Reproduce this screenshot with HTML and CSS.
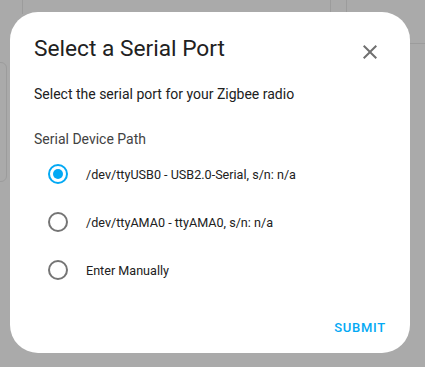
FILE: index.html
```html
<!DOCTYPE html>
<html>
<head>
<meta charset="utf-8">
<link rel="stylesheet" href="styles.css">
</head>
<body>
<div class="backdrop">
  <div class="bg-line bg-v1"></div>
  <div class="bg-line bg-v2"></div>
  <div class="bg-line bg-v3"></div>
  <div class="bg-line bg-h1"></div>
  <div class="bg-card"></div>
  <div class="dialog">
    <div class="header">
      <h2 class="title">Select a Serial Port</h2>
      <button class="close" aria-label="Close">
        <svg width="24" height="24" viewBox="0 0 24 24"><path d="M19 6.41 17.59 5 12 10.59 6.41 5 5 6.41 10.59 12 5 17.59 6.41 19 12 13.41 17.59 19 19 17.59 13.41 12z" fill="#707070"/></svg>
      </button>
    </div>
    <p class="desc">Select the serial port for your Zigbee radio</p>
    <div class="field-label">Serial Device Path</div>
    <div class="options">
      <label class="option"><span class="radio checked"></span><span class="opt-text">/dev/ttyUSB0 - USB2.0-Serial, s/n: n/a</span></label>
      <label class="option"><span class="radio"></span><span class="opt-text">/dev/ttyAMA0 - ttyAMA0, s/n: n/a</span></label>
      <label class="option"><span class="radio"></span><span class="opt-text">Enter Manually</span></label>
    </div>
    <div class="actions">
      <button class="submit">SUBMIT</button>
    </div>
  </div>
</div>
</body>
</html>
```
FILE: styles.css
```css
html, body {
  margin: 0;
  padding: 0;
  background: #aaaaaa;
  font-family: Roboto, "Noto Sans", sans-serif;
}
.backdrop {
  position: relative;
  width: 425px;
  height: 367px;
  overflow: hidden;
  background: #aaaaaa;
  padding: 12px 15px 0 10px;
  box-sizing: border-box;
}
.bg-line {
  position: absolute;
  background: #9c9c9c;
}
.bg-v1 { left: 22px; top: 0; width: 1px; height: 14px; }
.bg-v2 { left: 330px; top: 0; width: 1px; height: 14px; }
.bg-v3 { left: 346px; top: 0; width: 1px; height: 14px; }
.bg-h1 { left: 400px; top: 43px; width: 30px; height: 1px; }
.bg-card {
  position: absolute;
  left: -20px;
  top: 62px;
  width: 25px;
  height: 118px;
  border: 1px solid #9c9c9c;
  border-radius: 6px;
}
.dialog {
  position: relative;
  width: 400px;
  height: 341px;
  background: #ffffff;
  border-radius: 28px;
  box-sizing: border-box;
  padding: 0 24px 0 24px;
  display: flex;
  flex-direction: column;
}
.header {
  display: flex;
  align-items: center;
  justify-content: space-between;
  height: 56px;
  margin-top: 12px;
}
.title {
  margin: 0;
  font-size: 22.7px;
  font-weight: 400;
  color: #212121;
  line-height: 28px;
  position: relative;
  top: -3px;
}
.close {
  border: 0;
  background: none;
  padding: 0;
  width: 24px;
  height: 24px;
  margin-right: 4px;
  position: relative;
  top: 0;
  cursor: pointer;
}
.desc {
  margin: 6px 0 0 0;
  font-size: 14px;
  line-height: 20px;
  color: #212121;
  position: relative;
  top: -2px;
}
.field-label {
  margin-top: 23px;
  font-size: 14px;
  line-height: 20px;
  color: #424242;
}
.options {
  display: flex;
  flex-direction: column;
  margin-top: 1px;
}
.option {
  display: flex;
  align-items: center;
  height: 48px;
}
.radio {
  width: 20px;
  height: 20px;
  box-sizing: border-box;
  border: 2px solid #757575;
  border-radius: 50%;
  margin-left: 14px;
  margin-right: 18px;
  position: relative;
  flex: none;
}
.radio.checked {
  border-color: #03a9f4;
}
.radio.checked::after {
  content: "";
  position: absolute;
  left: 3px;
  top: 3px;
  width: 10px;
  height: 10px;
  border-radius: 50%;
  background: #03a9f4;
}
.opt-text {
  font-size: 12.6px;
  color: #212121;
}
.actions {
  display: flex;
  justify-content: flex-end;
  margin-top: 24px;
}
.submit {
  border: 0;
  background: none;
  padding: 0;
  font-family: Roboto, sans-serif;
  font-size: 13px;
  font-weight: 500;
  letter-spacing: 0.75px;
  color: #03a9f4;
  line-height: 20px;
}
```
